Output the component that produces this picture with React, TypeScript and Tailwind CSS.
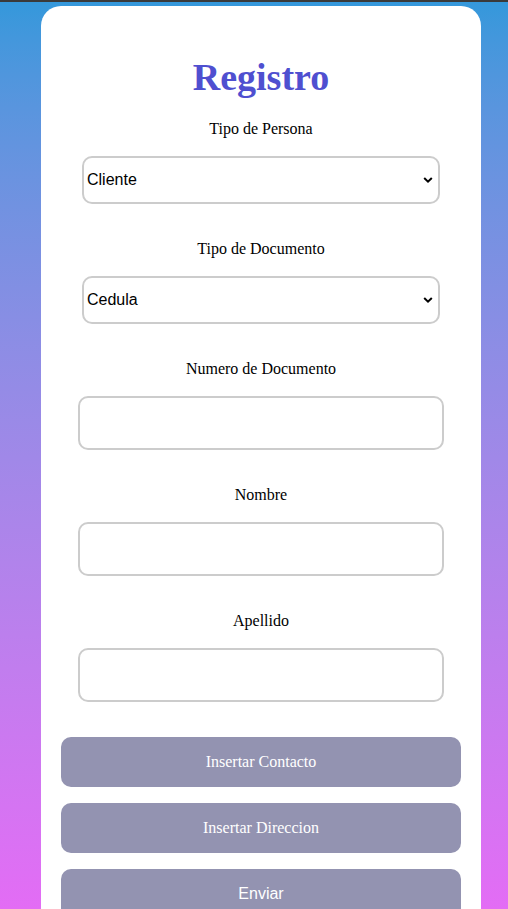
import React from "react";

const serif = { fontFamily: '"Liberation Serif", "Times New Roman", serif' };

function Chevron() {
  return (
    <svg
      className="pointer-events-none absolute right-[7px] top-1/2 -translate-y-1/2"
      width="10"
      height="7"
      viewBox="0 0 10 7"
      fill="none"
    >
      <path d="M1.2 1.5 L5 5.2 L8.8 1.5" stroke="#000" strokeWidth="2" />
    </svg>
  );
}

function Label({ text, className = "" }: { text: string; className?: string }) {
  return (
    <div className={`text-center text-[16px] leading-[18px] text-black ${className}`} style={serif}>
      {text}
    </div>
  );
}

function Select({ value, options }: { value: string; options: string[] }) {
  return (
    <div className="relative mx-auto mt-[18px] h-[48px] w-[358px]">
      <select
        defaultValue={value}
        className="h-full w-full appearance-none rounded-[10px] border-2 border-[#cccccc] bg-white pl-[3px] text-[16px] text-black outline-none"
        style={{ fontFamily: '"Liberation Sans", Arial, sans-serif' }}
      >
        {options.map((o) => (
          <option key={o}>{o}</option>
        ))}
      </select>
      <Chevron />
    </div>
  );
}

function Input() {
  return (
    <input
      type="text"
      className="mx-auto mt-[18px] block h-[54px] w-[366px] rounded-[10px] border-2 border-[#cccccc] bg-white px-2 text-[16px] outline-none"
    />
  );
}

function Button({ text, sans = false, className = "" }: { text: string; sans?: boolean; className?: string }) {
  return (
    <button
      type="button"
      className={`flex h-[50px] w-full items-center justify-center rounded-[10px] bg-[#9393b1] text-[16px] text-white ${className}`}
      style={sans ? { fontFamily: '"Liberation Sans", Arial, sans-serif' } : serif}
    >
      {text}
    </button>
  );
}

export default function App() {
  return (
    <div className="h-screen overflow-hidden border-t-2 border-[#3a3a3a] bg-gradient-to-b from-[#3498db] to-[#e36cf5]">
      <div className="ml-[41px] mt-1 w-[440px] rounded-[20px] bg-white px-5 pb-5 pt-[49px]">
        <h1
          className="text-center text-[38px] font-bold leading-[44px] text-[#4f4fd0]"
          style={serif}
        >
          Registro
        </h1>
        <Label text="Tipo de Persona" className="mt-[21px]" />
        <Select value="Cliente" options={["Cliente", "Proveedor"]} />
        <Label text="Tipo de Documento" className="mt-[36px]" />
        <Select value="Cedula" options={["Cedula", "Pasaporte"]} />
        <Label text="Numero de Documento" className="mt-[36px]" />
        <Input />
        <Label text="Nombre" className="mt-[36px]" />
        <Input />
        <Label text="Apellido" className="mt-[36px]" />
        <Input />
        <div className="mt-[35px] flex flex-col gap-4">
          <Button text="Insertar Contacto" />
          <Button text="Insertar Direccion" />
          <Button text="Enviar" sans />
        </div>
      </div>
    </div>
  );
}
